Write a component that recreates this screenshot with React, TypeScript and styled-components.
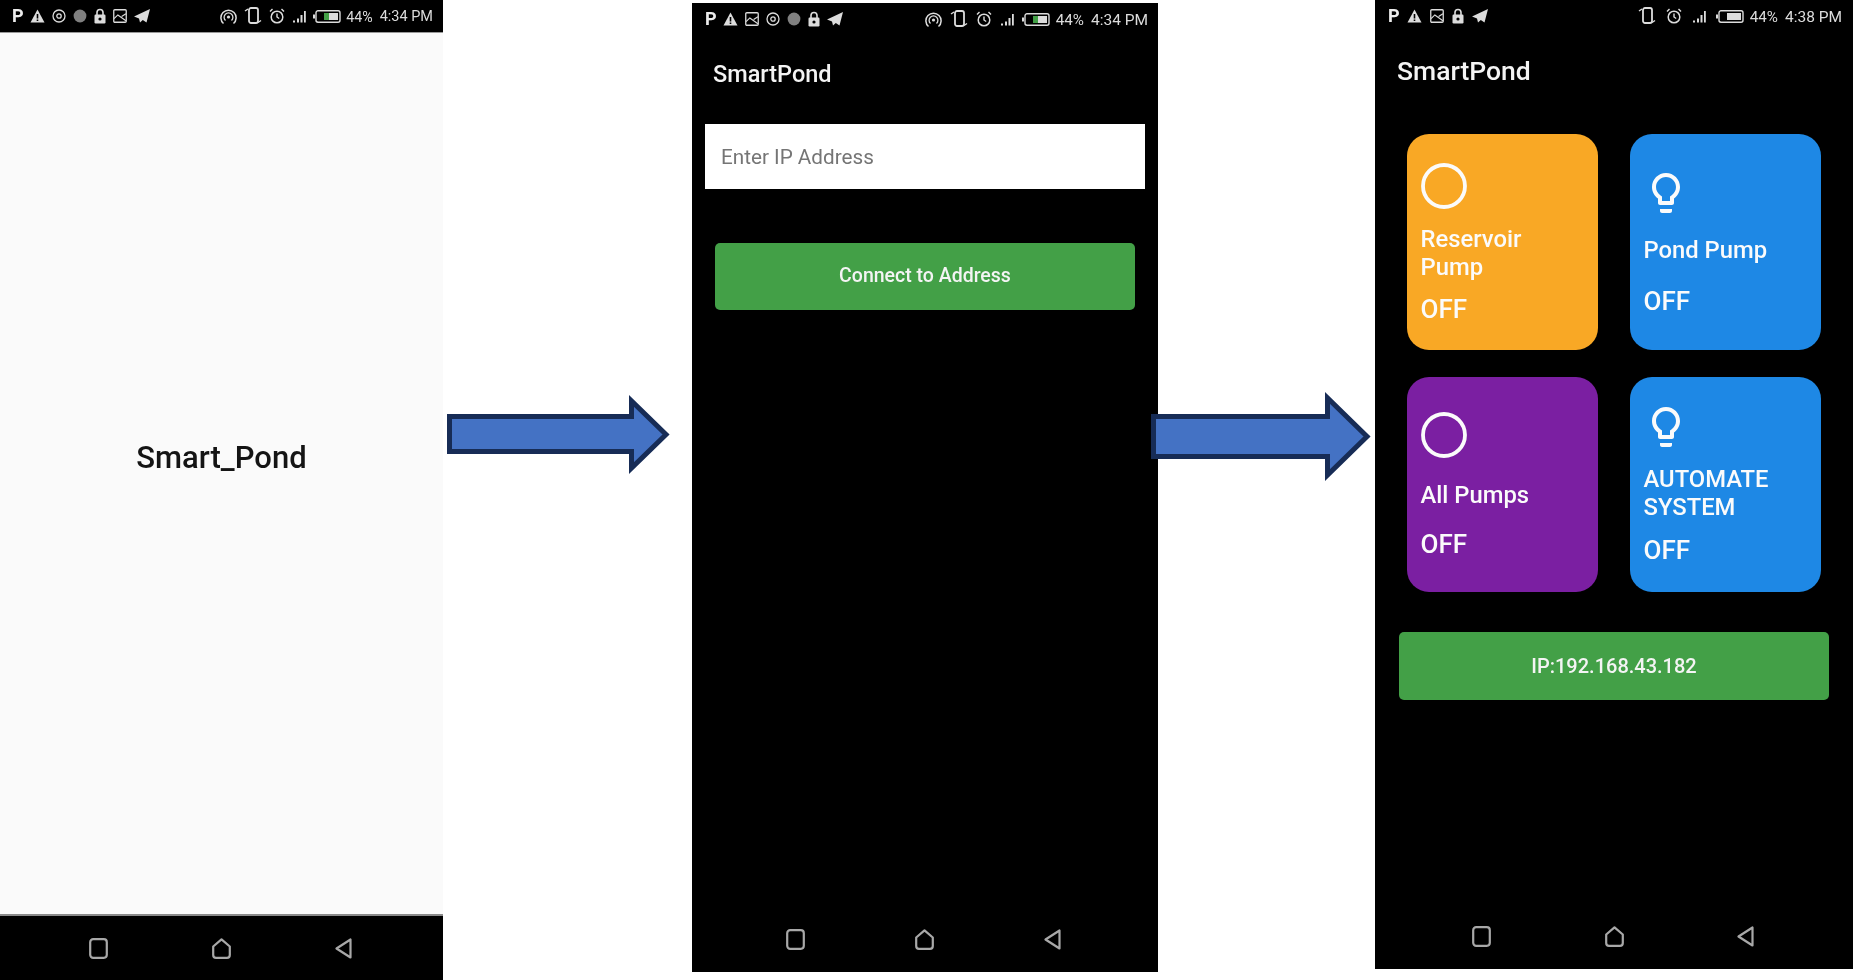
import React from "react";
import styled, { createGlobalStyle } from "styled-components";

const Global = createGlobalStyle`
  html, body { margin: 0; padding: 0; background: #fff; overflow: hidden; }
  body { font-family: Roboto, "Liberation Sans", sans-serif; }
`;

const Page = styled.div`
  display: flex;
  align-items: flex-start;
  width: 1853px;
  height: 980px;
  overflow: hidden;
`;

const Screen = styled.section<{ $w: number; $h: number; $top: number }>`
  flex: none;
  display: flex;
  flex-direction: column;
  width: ${(p) => p.$w}px;
  height: ${(p) => p.$h}px;
  margin-top: ${(p) => p.$top}px;
  background: #000;
  color: #fff;
  filter: blur(0.5px);
`;

const StatusBar = styled.div<{ $l: number; $r: number; $line?: boolean }>`
  flex: none;
  display: flex;
  align-items: center;
  justify-content: space-between;
  box-sizing: content-box;
  height: 32px;
  padding: 0 ${(p) => p.$r}px 0 ${(p) => p.$l}px;
  color: #dcdcdc;
  border-bottom: ${(p) => (p.$line ? "1px solid #999" : "0")};
`;

const StatusGroup = styled.div<{ $gap: number }>`
  display: flex;
  align-items: center;
  gap: ${(p) => p.$gap}px;
`;

const ParkingMark = styled.span`
  font: 700 18px/16px Roboto, sans-serif;
  color: #ececec;
  width: 11px;
`;

const StatusText = styled.span<{ $size: number }>`
  margin-top: 2px;
  font: 400 ${(p) => p.$size}px/16px Roboto, sans-serif;
  white-space: nowrap;
`;

const Splash = styled.div`
  flex: 1;
  display: flex;
  align-items: center;
  justify-content: center;
  padding-bottom: 32px;
  background: #fafafa;
  color: #141414;
  font: 500 31px/40px Roboto, sans-serif;
`;

const Body = styled.div`
  flex: 1;
  display: flex;
  flex-direction: column;
  align-items: flex-start;
`;

const Title = styled.h1<{ $size: number; $ml: number }>`
  margin: 19px 0 0 ${(p) => p.$ml}px;
  font: 500 ${(p) => p.$size}px/40px Roboto, sans-serif;
  color: #f4f4f4;
`;

const AddressInput = styled.div`
  box-sizing: border-box;
  display: flex;
  align-items: center;
  width: 440px;
  height: 65px;
  margin: 30px 0 0 13px;
  padding-left: 16px;
  background: #fff;
  color: #757575;
  font: 400 20.7px/24px Roboto, sans-serif;
`;

const GreenButton = styled.button<{ $w: number; $h: number; $mt: number; $ml: number; $fs: number; $pb: number }>`
  display: block;
  width: ${(p) => p.$w}px;
  height: ${(p) => p.$h}px;
  margin: ${(p) => p.$mt}px 0 0 ${(p) => p.$ml}px;
  padding: 0 0 ${(p) => p.$pb}px;
  border: 0;
  border-radius: 5px;
  background: #43a047;
  color: #f4f4f4;
  font: 500 ${(p) => p.$fs}px/24px Roboto, sans-serif;
`;

const CardGrid = styled.div`
  display: grid;
  grid-template-columns: 191px 191px;
  grid-template-rows: 216px 215px;
  column-gap: 32px;
  row-gap: 27px;
  margin: 43px 0 0 32px;
`;

const Card = styled.div<{ $bg: string; $pt: number }>`
  box-sizing: border-box;
  display: flex;
  flex-direction: column;
  align-items: flex-start;
  padding: ${(p) => p.$pt}px 0 0 13.5px;
  border-radius: 22px;
  background: ${(p) => p.$bg};
  color: #fbfbfb;
`;

const CardLabel = styled.div<{ $mt: number }>`
  margin-top: ${(p) => p.$mt}px;
  font: 500 23.8px/28px Roboto, sans-serif;
`;

const CardState = styled.div<{ $mt: number }>`
  margin-top: ${(p) => p.$mt}px;
  font: 500 26px/30px Roboto, sans-serif;
`;

const NavBar = styled.nav<{ $l: number; $r: number; $line?: boolean }>`
  flex: none;
  box-sizing: border-box;
  display: flex;
  align-items: center;
  justify-content: space-between;
  height: 66px;
  padding: 0 ${(p) => p.$r}px 0 ${(p) => p.$l}px;
  background: #000;
  color: #a8a8a8;
  border-top: ${(p) => (p.$line ? "2px solid #8a8a8a" : "0")};
`;

const ArrowSlot = styled.div<{ $mt: number; $ml: number; $mr: number }>`
  flex: none;
  position: relative;
  z-index: 1;
  margin: ${(p) => p.$mt}px ${(p) => p.$mr}px 0 ${(p) => p.$ml}px;
  line-height: 0;
`;

const Ic = ({ w, h = 16, vb, children }: { w: number; h?: number; vb: string; children: React.ReactNode }) => (
  <svg width={w} height={h} viewBox={vb} fill="none" stroke="currentColor" style={{ flex: "none", display: "block" }}>
    {children}
  </svg>
);

const Warn = () => (
  <Ic w={15} h={14} vb="0 0 14 14">
    <path d="M7 0.5 14 13.5H0Z" fill="currentColor" stroke="none" />
    <path d="M7 5v4.5M7 10.500v1.500" stroke="#000" strokeWidth="1.6" />
  </Ic>
);
const Target = () => (
  <Ic w={14} h={14} vb="0 0 14 14">
    <circle cx="7" cy="7" r="6" strokeWidth="1.3" />
    <circle cx="7" cy="7" r="2.2" strokeWidth="1.3" />
  </Ic>
);
const Disc = () => (
  <Ic w={14} h={14} vb="0 0 14 14">
    <circle cx="7" cy="7" r="6.4" fill="#808080" stroke="none" />
  </Ic>
);
const Lock = () => (
  <Ic w={12} h={16} vb="0 0 12 16">
    <path d="M3 7V4.500a3 3 0 0 1 6 0V7" strokeWidth="1.6" />
    <rect x="0.5" y="6.5" width="11" height="9" rx="1.2" fill="currentColor" stroke="none" />
    <circle cx="6" cy="11" r="1.6" fill="#000" stroke="none" />
  </Ic>
);
const Pic = () => (
  <Ic w={14} h={14} vb="0 0 13 13">
    <rect x="0.7" y="0.7" width="11.6" height="11.6" rx="1" strokeWidth="1.2" />
    <path d="M1 9l3.500-3.500L12 11M8 7l4-2.500" strokeWidth="1.1" />
  </Ic>
);
const Send = () => (
  <Ic w={16} h={14} vb="0 0 16 14">
    <path d="M16 0 0 7.500l5 2 1 4 2.800-2.600 3.700 2.600Z" fill="currentColor" stroke="none" />
  </Ic>
);
const Cast = () => (
  <Ic w={17} h={17} vb="0 0 17 17">
    <path d="M3.500 15.500A7.600 7.600 0 1 1 13.500 15.500" strokeWidth="1.5" />
    <path d="M5.500 12.500A4.400 4.400 0 1 1 11.500 12.500" strokeWidth="1.3" />
    <circle cx="8.500" cy="9" r="1.6" fill="currentColor" stroke="none" />
  </Ic>
);
const Vibrate = () => (
  <Ic w={18} h={18} vb="0 0 18 18">
    <rect x="5" y="1" width="9" height="15" rx="2" strokeWidth="1.8" />
    <path d="M1 4l3-2M14 15.500l3-2" strokeWidth="1.5" />
  </Ic>
);
const Alarm = () => (
  <Ic w={16} h={16} vb="0 0 16 16">
    <circle cx="8" cy="9" r="5.800" strokeWidth="1.5" />
    <path d="M8 5.500V9l2.200 1.500M1 3.500 3.500 1M15 3.500 12.500 1" strokeWidth="1.4" />
  </Ic>
);
const Signal = () => (
  <Ic w={14} h={13} vb="0 0 14 13">
    <path d="M1 10.500h2v2H1zM5 8.500h2v4H5zM8.500 5h2v7.500h-2zM12 1h1.800v11.500H12z" fill="currentColor" stroke="none" />
  </Ic>
);
const Battery = ({ level }: { level: string }) => (
  <Ic w={28} h={13} vb="0 0 28 13">
    <rect x="3" y="0.8" width="24" height="11.4" rx="2" strokeWidth="1.4" />
    <rect x="0" y="4.500" width="2" height="4" fill="currentColor" stroke="none" />
    <rect x="16" y="3" width="9" height="7" fill="currentColor" stroke="none" />
    <rect x="11" y="3" width="5" height="7" fill={level} stroke="none" />
  </Ic>
);

const NavSquare = () => (
  <Ic w={19} h={21} vb="0 0 19 21">
    <rect x="1.2" y="1.2" width="16.6" height="18.6" rx="3" strokeWidth="2.2" />
  </Ic>
);
const NavHome = () => (
  <Ic w={19} h={21} vb="0 0 19 21">
    <path d="M9.500 1.400 17.800 8.500V17a2.800 2.800 0 0 1-2.800 2.800H4A2.800 2.800 0 0 1 1.200 17V8.500Z" strokeWidth="2.200" strokeLinejoin="round" />
  </Ic>
);
const NavBack = () => (
  <Ic w={17} h={21} vb="0 0 17 21">
    <path d="M15.500 1.500V19.500L1.500 10.500Z" strokeWidth="2.200" strokeLinejoin="round" />
  </Ic>
);

const Nav = ({ l, r, line }: { l: number; r: number; line?: boolean }) => (
  <NavBar $l={l} $r={r} $line={line}>
    <NavSquare />
    <NavHome />
    <NavBack />
  </NavBar>
);

const Ring = () => (
  <svg width="46" height="46" viewBox="0 0 46 46" fill="none" style={{ display: "block" }}>
    <circle cx="23" cy="23" r="21" stroke="currentColor" strokeWidth="3.800" />
  </svg>
);
const Bulb = () => (
  <svg width="48" height="48" viewBox="0 0 24 24" fill="currentColor" style={{ display: "block", margin: "-4px 0 -4px -2px" }}>
    <path d="M9 21c0 .55.45 1 1 1h4c.55 0 1-.45 1-1v-1H9v1zm3-19C8.140 2 5 5.140 5 9c0 2.380 1.190 4.470 3 5.740V17c0 .55.45 1 1 1h6c.55 0 1-.45 1-1v-2.260c1.810-1.270 3-3.360 3-5.740 0-3.860-3.140-7-7-7zm2.850 11.100l-.85.6V16h-4v-2.300l-.85-.6C7.800 12.160 7 10.630 7 9c0-2.760 2.240-5 5-5s5 2.240 5 5c0 1.630-.8 3.160-2.150 4.100z" />
  </svg>
);

const Arrow = ({ w, h, top, bottom, head }: { w: number; h: number; top: number; bottom: number; head: number }) => (
  <svg width={w} height={h} viewBox={`0 0 ${w} ${h}`} style={{ display: "block", overflow: "visible" }}>
    <path
      d={`M2.500 ${top}H${head}V7L${w - 4} ${h / 2}L${head} ${h - 7}V${bottom}H2.500Z`}
      fill="#4472c4"
      stroke="#172c56"
      strokeWidth="5"
    />
  </svg>
);

export default function App() {
  return (
    <Page>
      <Global />
      <Screen $w={443} $h={980} $top={0}>
        <StatusBar $l={12} $r={10} $line>
          <StatusGroup $gap={7}>
            <ParkingMark>P</ParkingMark>
            <Warn />
            <Target />
            <Disc />
            <Lock />
            <Pic />
            <Send />
          </StatusGroup>
          <StatusGroup $gap={5}>
            <StatusGroup $gap={7}>
              <Cast />
              <Vibrate />
              <Alarm />
              <Signal />
              <Battery level="#43a047" />
            </StatusGroup>
            <StatusGroup $gap={7}>
              <StatusText $size={14.200}>44%</StatusText>
              <StatusText $size={14.500}>4:34 PM</StatusText>
            </StatusGroup>
          </StatusGroup>
        </StatusBar>
        <Splash>Smart_Pond</Splash>
        <Nav l={89} r={91} line />
      </Screen>
      <ArrowSlot $mt={394} $ml={4} $mr={22}>
        <Arrow w={223} h={81} top={22.5} bottom={57.5} head={184.5} />
      </ArrowSlot>
      <Screen $w={466} $h={969} $top={3}>
        <StatusBar $l={13} $r={10}>
          <StatusGroup $gap={7}>
            <ParkingMark>P</ParkingMark>
            <Warn />
            <Pic />
            <Target />
            <Disc />
            <Lock />
            <Send />
          </StatusGroup>
          <StatusGroup $gap={6}>
            <StatusGroup $gap={8}>
              <Cast />
              <Vibrate />
              <Alarm />
              <Signal />
              <Battery level="#43a047" />
            </StatusGroup>
            <StatusGroup $gap={7}>
              <StatusText $size={15.200}>44%</StatusText>
              <StatusText $size={15.500}>4:34 PM</StatusText>
            </StatusGroup>
          </StatusGroup>
        </StatusBar>
        <Body>
          <Title $size={23.500} $ml={21}>SmartPond</Title>
          <AddressInput>Enter IP Address</AddressInput>
          <GreenButton $w={420} $h={67} $mt={54} $ml={23} $fs={19.500} $pb={1}>Connect to Address</GreenButton>
        </Body>
        <Nav l={94} r={97} />
      </Screen>
      <ArrowSlot $mt={391} $ml={-7} $mr={4}>
        <Arrow w={220} h={91} top={25.5} bottom={65.5} head={176.5} />
      </ArrowSlot>
      <Screen $w={478} $h={969} $top={0}>
        <StatusBar $l={13} $r={11}>
          <StatusGroup $gap={8}>
            <ParkingMark>P</ParkingMark>
            <Warn />
            <Pic />
            <Lock />
            <Send />
          </StatusGroup>
          <StatusGroup $gap={6}>
            <StatusGroup $gap={10}>
              <Vibrate />
              <Alarm />
              <Signal />
              <Battery level="#dcdcdc" />
            </StatusGroup>
            <StatusGroup $gap={7}>
              <StatusText $size={15.200}>44%</StatusText>
              <StatusText $size={15.500}>4:38 PM</StatusText>
            </StatusGroup>
          </StatusGroup>
        </StatusBar>
        <Body>
          <Title $size={26.500} $ml={22}>SmartPond</Title>
          <CardGrid>
            <Card $bg="#f9a825" $pt={29}>
              <Ring />
              <CardLabel $mt={16}>Reservoir<br />Pump</CardLabel>
              <CardState $mt={13}>OFF</CardState>
            </Card>
            <Card $bg="#1e88e5" $pt={39}>
              <Bulb />
              <CardLabel $mt={23}>Pond Pump</CardLabel>
              <CardState $mt={22}>OFF</CardState>
            </Card>
            <Card $bg="#7b1fa2" $pt={35}>
              <Ring />
              <CardLabel $mt={23}>All Pumps</CardLabel>
              <CardState $mt={20}>OFF</CardState>
            </Card>
            <Card $bg="#1e88e5" $pt={30}>
              <Bulb />
              <CardLabel $mt={18}>AUTOMATE<br />SYSTEM</CardLabel>
              <CardState $mt={14}>OFF</CardState>
            </Card>
          </CardGrid>
          <GreenButton $w={430} $h={68} $mt={40} $ml={24} $fs={20} $pb={0}>IP:192.168.43.182</GreenButton>
        </Body>
        <Nav l={97} r={99} />
      </Screen>
    </Page>
  );
}
